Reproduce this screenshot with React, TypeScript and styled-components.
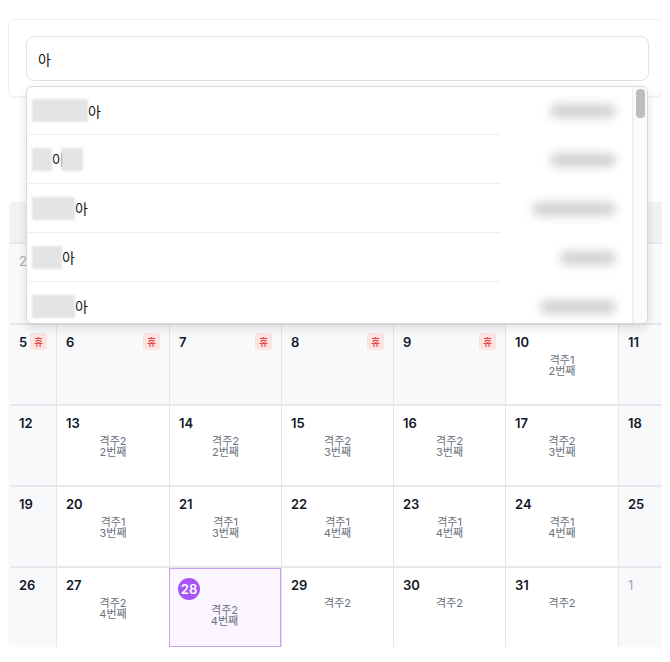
import React from 'react';
import styled, {createGlobalStyle} from 'styled-components';

const GlobalStyle = createGlobalStyle`
    body {
        margin: 8px;
        background: #ffffff;
        font-family: Inter, "Noto Sans CJK KR", sans-serif;
        color: #111827;
    }
`

type Suggestion = {
    before: number
    after?: number
    overlap?: boolean
    tail: number
}

const suggestions: Suggestion[] = [
    {before: 56, tail: 66},
    {before: 20, after: 22, overlap: true, tail: 66},
    {before: 43, tail: 84},
    {before: 30, tail: 56},
    {before: 43, tail: 76},
]

type DayType = {
    day: number
    muted?: boolean
    off?: boolean
    today?: boolean
    shift?: string
}

// 2025년 10월
const weeks: DayType[][] = [
    [
        {day: 28, muted: true},
        {day: 29, muted: true},
        {day: 30, muted: true},
        {day: 1},
        {day: 2},
        {day: 3, off: true},
        {day: 4},
    ],
    [
        {day: 5, off: true},
        {day: 6, off: true},
        {day: 7, off: true},
        {day: 8, off: true},
        {day: 9, off: true},
        {day: 10, shift: '격주1\n2번째'},
        {day: 11},
    ],
    [
        {day: 12},
        {day: 13, shift: '격주2\n2번째'},
        {day: 14, shift: '격주2\n2번째'},
        {day: 15, shift: '격주2\n3번째'},
        {day: 16, shift: '격주2\n3번째'},
        {day: 17, shift: '격주2\n3번째'},
        {day: 18},
    ],
    [
        {day: 19},
        {day: 20, shift: '격주1\n3번째'},
        {day: 21, shift: '격주1\n3번째'},
        {day: 22, shift: '격주1\n4번째'},
        {day: 23, shift: '격주1\n4번째'},
        {day: 24, shift: '격주1\n4번째'},
        {day: 25},
    ],
    [
        {day: 26},
        {day: 27, shift: '격주2\n4번째'},
        {day: 28, today: true, shift: '격주2\n4번째'},
        {day: 29, shift: '격주2'},
        {day: 30, shift: '격주2'},
        {day: 31, shift: '격주2'},
        {day: 1, muted: true},
    ],
]

const weekdays = ['일', '월', '화', '수', '목', '금', '토']

export default function App() {
    return (
        <>
            <GlobalStyle/>
            <SearchCard>
                <SearchInput value="아" readOnly/>
                <Dropdown>
                    <List>
                        {suggestions.map((s, i) => (
                            <Option key={i}>
                                <OptionMain>
                                    <Smudge $w={s.before}/>
                                    <OptionText>아</OptionText>
                                    {s.after && <Smudge $w={s.after} $pull={s.overlap}/>}
                                </OptionMain>
                                <OptionSide>
                                    <SideBlur $w={s.tail}/>
                                </OptionSide>
                            </Option>
                        ))}
                    </List>
                    <ScrollTrack>
                        <ScrollThumb/>
                    </ScrollTrack>
                </Dropdown>
            </SearchCard>

            <Calendar>
                <HeadRow>
                    {weekdays.map((w, i) => (
                        <HeadCell key={w} $first={i === 0}>{w}</HeadCell>
                    ))}
                </HeadRow>
                {weeks.map((week, wi) => (
                    <Week key={wi}>
                        {week.map((d, i) => {
                            const weekend = i === 0 || i === 6
                            return (
                                <Cell
                                    key={i}
                                    $first={i === 0}
                                    $grey={weekend || !!d.off}
                                    $today={d.today}
                                >
                                    <CellHead>
                                        {d.today
                                            ? <TodayMark>{d.day}</TodayMark>
                                            : <DayNum $muted={d.muted}>{d.day}</DayNum>}
                                        {d.off && <OffBadge>휴</OffBadge>}
                                    </CellHead>
                                    {d.shift && <Shift>{d.shift}</Shift>}
                                </Cell>
                            )
                        })}
                    </Week>
                ))}
            </Calendar>
        </>
    )
}

const SearchCard = styled.div`
    position: relative;
    margin-top: 11px;
    width: 655px;
    box-sizing: border-box;
    padding: 16px 13px 15px 17px;
    border: 1px solid #f0f0f0;
    border-radius: 6px;
    box-shadow: 0 1px 3px rgba(0, 0, 0, 0.05);
    background: #fff;
`

const SearchInput = styled.input`
    display: block;
    width: 100%;
    height: 45px;
    box-sizing: border-box;
    padding: 0 11px;
    border: 1px solid #e1e1e1;
    border-radius: 8px;
    font-family: Inter, "Noto Sans CJK KR", sans-serif;
    font-size: 14px;
    color: #111;
    outline: none;
    background: #fff;
`

const Dropdown = styled.div`
    position: absolute;
    top: 66px;
    left: 17px;
    z-index: 10;
    width: 622px;
    height: 238px;
    box-sizing: border-box;
    display: flex;
    border: 1px solid #d9d9d9;
    border-radius: 6px;
    background: #fff;
    box-shadow: 0 4px 10px rgba(0, 0, 0, 0.12);
    overflow: hidden;
`

const List = styled.div`
    flex: 1;
    display: flex;
    flex-direction: column;
`

const Option = styled.div`
    display: flex;
    height: 49px;
    flex-shrink: 0;
    &:first-child {
        height: 48px;
    }
`

const OptionMain = styled.div`
    flex: 1;
    display: flex;
    align-items: center;
    padding-left: 5px;
    border-bottom: 1px solid #efefef;
`

const Smudge = styled.div<{ $w: number, $pull?: boolean }>`
    width: ${p => p.$w}px;
    height: 23px;
    margin-left: ${p => p.$pull ? '-4px' : '0'};
    background: #e4e4e4;
    filter: blur(1px);
`

const OptionText = styled.span`
    font-size: 14px;
    color: #111;
`

const OptionSide = styled.div`
    width: 131px;
    display: flex;
    align-items: center;
    justify-content: flex-end;
    padding-right: 16px;
    box-sizing: border-box;
`

const SideBlur = styled.div<{ $w: number }>`
    width: ${p => p.$w}px;
    height: 14px;
    border-radius: 7px;
    background: #d2d2d2;
    filter: blur(5px);
`

const ScrollTrack = styled.div`
    width: 15px;
    background: #fafafa;
    border-left: 1px solid #ececec;
    box-sizing: border-box;
    padding: 2px 2px 0 3px;
`

const ScrollThumb = styled.div`
    height: 29px;
    border-radius: 4px;
    background: #bdbdbd;
`

const Calendar = styled.div`
    margin: 105px 0 0 2px;
    width: 654px;
    background: #fff;
    border-radius: 4px;
    box-shadow: 0 1px 3px rgba(0, 0, 0, 0.08);
    overflow: hidden;
`

const columns = '46px 113px 112px 112px 112px 113px 46px'

const HeadRow = styled.div`
    display: grid;
    grid-template-columns: ${columns};
    height: 40px;
    background: #f1f2f4;
`

const HeadCell = styled.div<{ $first?: boolean }>`
    display: flex;
    align-items: center;
    justify-content: center;
    font-size: 12px;
    font-weight: 600;
    color: #6b7280;
    border-left: ${p => p.$first ? 'none' : '1px solid #e5e7eb'};
`

const Week = styled.div`
    display: grid;
    grid-template-columns: ${columns};
    height: 81px;
    border-top: 2px solid #e7e8eb;
    box-sizing: border-box;
`

const Cell = styled.div<{ $first?: boolean, $grey?: boolean, $today?: boolean }>`
    display: flex;
    flex-direction: column;
    box-sizing: border-box;
    padding: 8px 9px 0 9px;
    background: ${p => p.$today ? '#faf5ff' : p.$grey ? '#f8f9fb' : '#fff'};
    border-left: ${p => p.$first ? 'none' : '1px solid #e5e7eb'};
    ${p => p.$today && `
        border: 1px solid #c9a2ee;
        padding: 9px 9px 0 8px;
    `}
`

const CellHead = styled.div`
    display: flex;
    align-items: center;
    justify-content: space-between;
    min-height: 17px;
`

const DayNum = styled.span<{ $muted?: boolean }>`
    font-size: 13px;
    color: ${p => p.$muted ? '#a3a8b1' : '#111827'};
    font-weight: ${p => p.$muted ? 400 : 600};
`

const TodayMark = styled.span`
    width: 22px;
    height: 22px;
    border-radius: 50%;
    background: #a855f7;
    color: #fff;
    font-size: 13px;
    font-weight: 600;
    display: flex;
    align-items: center;
    justify-content: center;
`

const OffBadge = styled.span`
    width: 17px;
    height: 17px;
    border-radius: 3px;
    background: #fde2e2;
    color: #dc2626;
    font-size: 10px;
    display: flex;
    align-items: center;
    justify-content: center;
`

const Shift = styled.div`
    margin-top: 5px;
    text-align: center;
    white-space: pre-line;
    font-size: 11px;
    line-height: 11px;
    color: #6b7280;
`
